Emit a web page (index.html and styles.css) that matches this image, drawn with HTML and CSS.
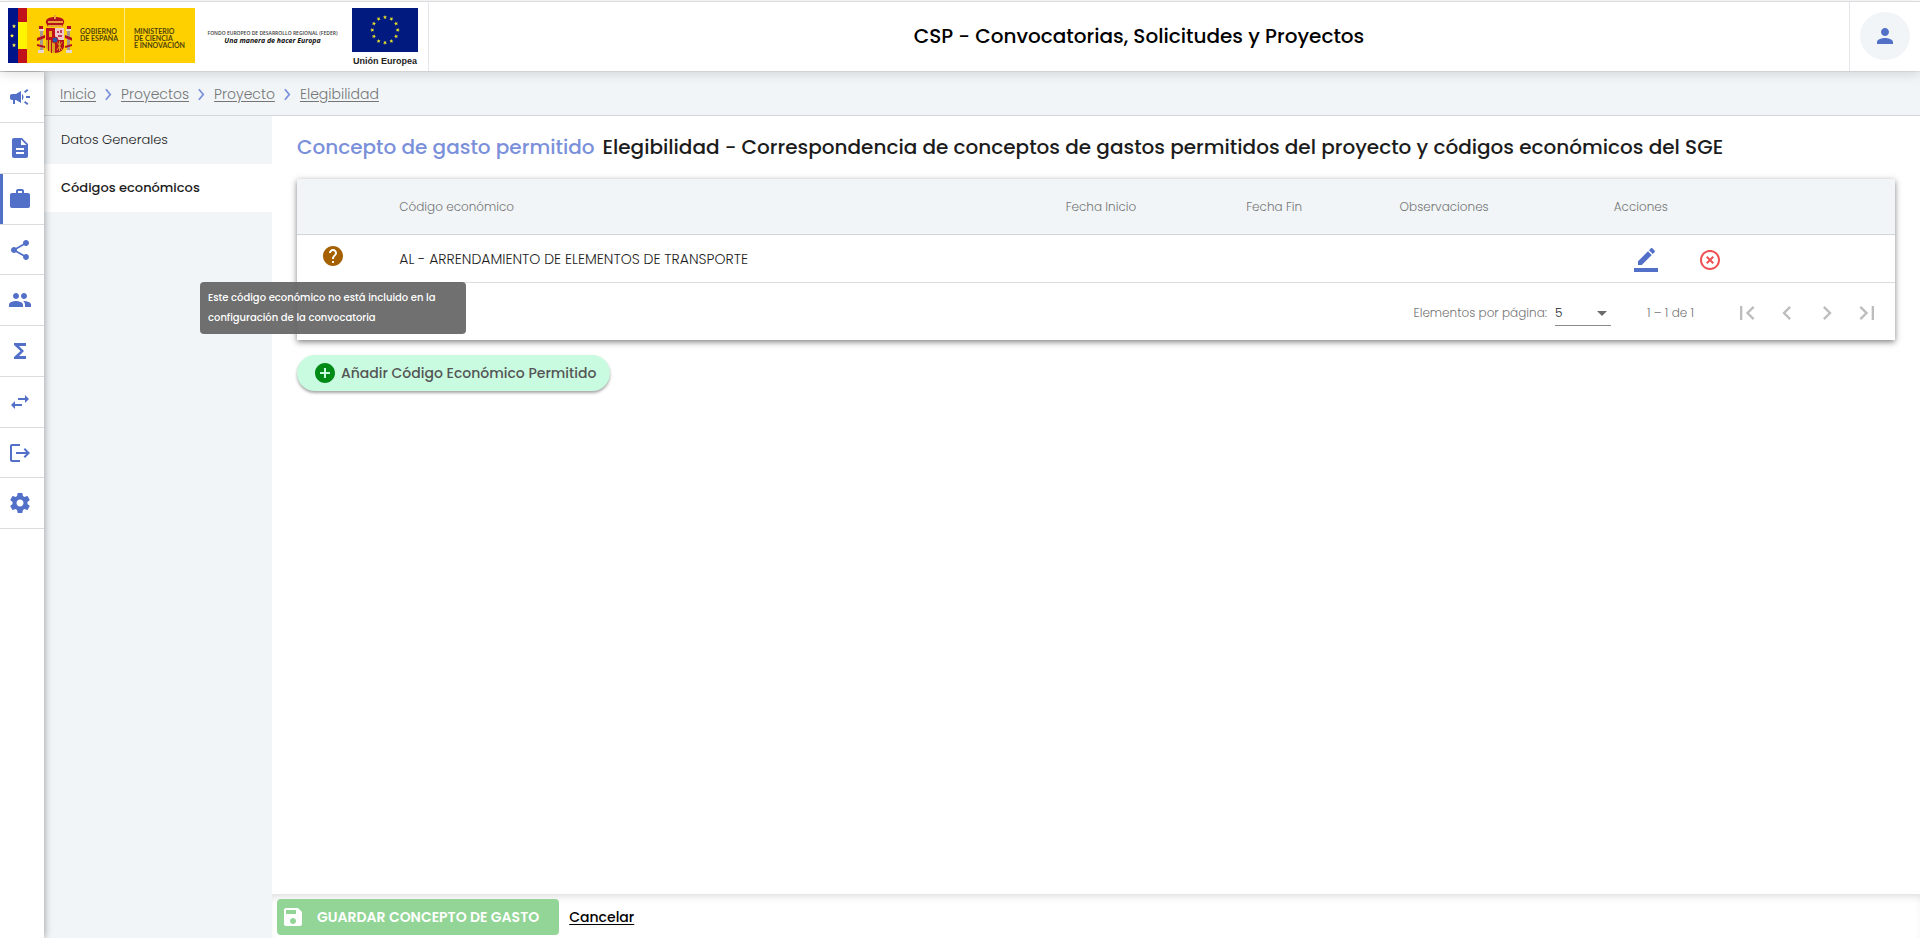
FILE: index.html
```html
<!DOCTYPE html>
<html lang="es">
<head>
<meta charset="utf-8">
<meta name="viewport" content="width=device-width, initial-scale=1">
<title>CSP - Convocatorias, Solicitudes y Proyectos</title>
<link rel="stylesheet" href="styles.css">
</head>
<body>
<header class="topbar">
  <div class="logos">
    <div class="gov-logo">
      <svg class="gov-flags" viewBox="0 0 64 55" aria-hidden="true">
        <path fill="#ffd000" d="M0 0h64v55H0z"/>
        <path fill="#001489" d="M0 0h10v55H0z"/>
        <path fill="#c1121c" d="M10 0h9v14h-9zM10 41h9v14h-9z"/>
        <path fill="#fff500" d="M10 14h9v27h-9z"/>
        <g fill="#fff04a">
          <path id="st" d="M6 16l.6 1.4 1.5.1-1.200 1 .4 1.500L6 19.200 4.700 20l.4-1.500-1.200-1 1.500-.1z"/>
          <use href="#st" x="-2" y="9.500"/>
          <use href="#st" y="19"/>
        </g>
        <g>
          <path fill="#b5131c" d="M38 15c-1-4 3-6 9-6s10 2 9 6l-2 4H40z"/>
          <path fill="#e8a33a" d="M40 13h15v2H40zM46 7h2v4h-2zM40 17h14v2H40z"/>
          <path fill="#e8d9d0" d="M31 21h5v2h-5zM58 21h5v2h-5zM30 42h6v3h-6zM58 42h6v3h-6z"/>
          <path fill="#b5131c" d="M31 18h4v3h-4zM59 18h4v3h-4z"/>
          <path fill="#a99a90" d="M32 23h3v19h-3zM59 23h3v19h-3z"/>
          <path fill="#b5131c" d="M29 30l8-3v3l-8 3zM65 30l-8-3v3l8 3zM29 36l8 2v2l-8-2zM64 36l-7 2v2l7-2z"/>
          <path fill="#c1121c" d="M38 20h9v12h-9z"/>
          <path fill="#efc9cb" d="M47 20h9v12h-9z"/>
          <path fill="#f0a818" d="M41 23h3v6h-3z"/>
          <path fill="#c23a5a" d="M49 23h2v2h-2zM52 22h2v3h-2zM50 27h4v2h-4z"/>
          <path fill="#dba21c" d="M38 32h9v13c-5 0-9-3-9-7z"/>
          <path fill="#b5131c" d="M40 32h1v11h-1zM43 32h1v13h-1zM47 32h9v6c0 4-4 7-9 7z"/>
          <path fill="none" stroke="#dba21c" d="M49 34l5 8M54 34l-5 8M51.500 33v10"/>
          <circle cx="47" cy="32" r="3" fill="#2657a8" stroke="#c1121c"/>
        </g>
      </svg>
      <span class="gov-name">GOBIERNO<br>DE ESPAÑA</span>
      <span class="gov-dept">MINISTERIO<br>DE CIENCIA<br>E INNOVACIÓN</span>
    </div>
    <p class="feder">FONDO EUROPEO DE DESARROLLO REGIONAL (FEDER)<em>Una manera de hacer Europa</em></p>
    <div class="eu-logo">
      <svg class="eu-flag" viewBox="0 0 66 44" aria-hidden="true">
        <path fill="#001a80" d="M0 0h66v44H0z"/>
        <g fill="#e8e02a">
          <path id="s" d="M33 7l.6 1.400 1.500.1-1.200 1 .4 1.500-1.300-.8-1.300.8.4-1.500-1.200-1 1.500-.1z"/>
          <use href="#s" transform="rotate(30 33 22)"/><use href="#s" transform="rotate(60 33 22)"/>
          <use href="#s" transform="rotate(90 33 22)"/><use href="#s" transform="rotate(120 33 22)"/>
          <use href="#s" transform="rotate(150 33 22)"/><use href="#s" transform="rotate(180 33 22)"/>
          <use href="#s" transform="rotate(210 33 22)"/><use href="#s" transform="rotate(240 33 22)"/>
          <use href="#s" transform="rotate(270 33 22)"/><use href="#s" transform="rotate(300 33 22)"/>
          <use href="#s" transform="rotate(330 33 22)"/>
        </g>
      </svg>
      <span class="eu-name">Unión Europea</span>
    </div>
  </div>
  <h1 class="app-title">CSP - Convocatorias, Solicitudes y Proyectos</h1>
  <div class="user-area">
    <button class="user-button" type="button" aria-label="Usuario">
      <svg class="icon" viewBox="0 0 24 24"><path d="M12 12c2.210 0 4-1.790 4-4s-1.790-4-4-4-4 1.790-4 4 1.790 4 4 4zm0 2c-2.670 0-8 1.340-8 4v2h16v-2c0-2.660-5.330-4-8-4z"/></svg>
    </button>
  </div>
</header>

<div class="shell">
  <nav class="rail" aria-label="Módulos">
    <a class="rail-item" href="#" aria-label="Convocatorias"><svg class="icon" viewBox="0 0 24 24"><path d="M18 11v2h4v-2h-4zm-2 6.610c.96.710 2.210 1.650 3.200 2.390.4-.53.8-1.070 1.200-1.600-.99-.74-2.240-1.680-3.200-2.400-.4.540-.8 1.080-1.200 1.610zM20.400 5.600c-.4-.53-.8-1.070-1.200-1.600-.99.740-2.240 1.680-3.200 2.400.4.530.8 1.070 1.200 1.600.96-.72 2.210-1.650 3.200-2.400zM4 9c-1.100 0-2 .9-2 2v2c0 1.100.9 2 2 2h1v4h2v-4h1l5 3V6L8 9H4zm11.500 3c0-1.330-.58-2.530-1.500-3.350v6.690c.92-.81 1.500-2.010 1.500-3.340z"/></svg></a>
    <a class="rail-item" href="#" aria-label="Solicitudes"><svg class="icon" viewBox="0 0 24 24"><path d="M14 2H6c-1.100 0-1.990.9-1.990 2L4 20c0 1.100.89 2 1.990 2H18c1.100 0 2-.9 2-2V8l-6-6zm2 16H8v-2h8v2zm0-4H8v-2h8v2zm-3-5V3.500L18.500 9H13z"/></svg></a>
    <a class="rail-item rail-item-active" href="#" aria-label="Proyectos"><svg class="icon" viewBox="0 0 24 24"><path d="M20 6h-4V4c0-1.110-.89-2-2-2h-4c-1.110 0-2 .89-2 2v2H4c-1.110 0-1.990.89-1.990 2L2 19c0 1.110.89 2 2 2h16c1.110 0 2-.89 2-2V8c0-1.110-.89-2-2-2zm-6 0h-4V4h4v2z"/></svg></a>
    <a class="rail-item" href="#" aria-label="Compartir"><svg class="icon" viewBox="0 0 24 24"><path d="M18 16.080c-.76 0-1.440.3-1.960.77L8.910 12.700c.05-.23.090-.46.090-.7s-.04-.47-.09-.7l7.050-4.110c.54.5 1.250.81 2.040.81 1.660 0 3-1.340 3-3s-1.340-3-3-3-3 1.340-3 3c0 .24.040.47.090.7L8.040 9.810C7.500 9.310 6.790 9 6 9c-1.660 0-3 1.340-3 3s1.340 3 3 3c.79 0 1.500-.31 2.040-.81l7.120 4.160c-.05.210-.08.430-.08.650 0 1.610 1.310 2.920 2.920 2.920s2.920-1.310 2.920-2.920-1.310-2.920-2.920-2.920z"/></svg></a>
    <a class="rail-item" href="#" aria-label="Grupos"><svg class="icon" viewBox="0 0 24 24"><path d="M16 11c1.660 0 2.990-1.340 2.990-3S17.660 5 16 5c-1.660 0-3 1.340-3 3s1.340 3 3 3zm-8 0c1.660 0 2.990-1.340 2.990-3S9.660 5 8 5C6.340 5 5 6.340 5 8s1.340 3 3 3zm0 2c-2.330 0-7 1.170-7 3.500V19h14v-2.500c0-2.330-4.670-3.500-7-3.500zm8 0c-.29 0-.62.020-.97.050 1.160.84 1.970 1.970 1.970 3.450V19h6v-2.500c0-2.330-4.670-3.500-7-3.500z"/></svg></a>
    <a class="rail-item" href="#" aria-label="Totales"><svg class="icon" viewBox="0 0 24 24"><path d="M18 4H6v2l6.500 6L6 18v2h12v-3h-7l5-5-5-5h7z"/></svg></a>
    <a class="rail-item" href="#" aria-label="Intercambios"><svg class="icon" viewBox="0 0 24 24"><path d="M6.990 11L3 15l3.990 4v-3H14v-2H6.990v-3zM21 9l-3.990-4v3H10v2h7.010v3L21 9z"/></svg></a>
    <a class="rail-item" href="#" aria-label="Salidas"><svg class="icon" viewBox="0 0 24 24"><path d="M4 5h8V3H4c-1.100 0-2 .9-2 2v14c0 1.100.9 2 2 2h8v-2H4V5zM17 7l-1.410 1.410L18.170 11H8v2h10.170l-2.580 2.580L17 17l5-5-5-5z"/></svg></a>
    <a class="rail-item" href="#" aria-label="Configuración"><svg class="icon" viewBox="0 0 24 24"><path d="M19.430 12.980c.04-.32.070-.64.070-.98s-.03-.66-.07-.98l2.110-1.650c.19-.15.240-.42.120-.64l-2-3.460c-.12-.22-.39-.3-.61-.22l-2.490 1c-.52-.4-1.080-.73-1.690-.98l-.38-2.650C14.460 2.180 14.250 2 14 2h-4c-.25 0-.46.180-.49.420l-.38 2.650c-.61.250-1.170.590-1.690.98l-2.490-1c-.23-.09-.49 0-.61.220l-2 3.460c-.13.220-.07.490.12.640l2.110 1.650c-.04.320-.07.650-.07.980s.03.660.07.980l-2.110 1.650c-.19.150-.24.420-.12.640l2 3.460c.12.220.39.300.61.220l2.490-1c.52.400 1.080.730 1.690.98l.38 2.650c.03.240.24.420.49.420h4c.25 0 .46-.18.490-.42l.38-2.650c.61-.25 1.170-.59 1.690-.98l2.490 1c.23.090.49 0 .61-.22l2-3.460c.12-.22.070-.49-.12-.64l-2.110-1.650zM12 15.500c-1.930 0-3.500-1.570-3.500-3.500s1.570-3.500 3.500-3.500 3.500 1.570 3.500 3.500-1.570 3.500-3.500 3.500z"/></svg></a>
  </nav>

  <div class="workspace">
    <nav class="breadcrumb" aria-label="Ruta">
      <a href="#">Inicio</a><svg class="crumb-sep" viewBox="0 0 8 14"><path d="M1 1l5 6-5 6"/></svg>
      <a href="#">Proyectos</a><svg class="crumb-sep" viewBox="0 0 8 14"><path d="M1 1l5 6-5 6"/></svg>
      <a href="#">Proyecto</a><svg class="crumb-sep" viewBox="0 0 8 14"><path d="M1 1l5 6-5 6"/></svg>
      <a href="#">Elegibilidad</a>
    </nav>
    <div class="columns">
      <nav class="sidenav" aria-label="Secciones">
        <a class="sidenav-item" href="#">Datos Generales</a>
        <a class="sidenav-item sidenav-item-active" href="#">Códigos económicos</a>
      </nav>
      <div class="page">
        <main class="content">
          <h2 class="page-title"><span class="page-title-lead">Concepto de gasto permitido</span><span>Elegibilidad - Correspondencia de conceptos de gastos permitidos del proyecto y códigos económicos del SGE</span></h2>
          <section class="card">
            <table class="grid">
              <colgroup><col class="col-help"><col class="col-code"><col class="col-start"><col class="col-end"><col class="col-notes"><col class="col-actions"></colgroup>
              <thead>
                <tr><th></th><th>Código económico</th><th>Fecha Inicio</th><th>Fecha Fin</th><th>Observaciones</th><th>Acciones</th></tr>
              </thead>
              <tbody>
                <tr>
                  <td class="help-cell">
                    <svg class="icon help-icon" viewBox="0 0 24 24"><path d="M12 2C6.480 2 2 6.480 2 12s4.480 10 10 10 10-4.480 10-10S17.520 2 12 2zm1 17h-2v-2h2v2zm2.070-7.750l-.9.920C13.450 12.900 13 13.500 13 15h-2v-.5c0-1.100.45-2.100 1.170-2.830l1.240-1.260c.37-.36.590-.86.590-1.410 0-1.100-.9-2-2-2s-2 .9-2 2H8c0-2.210 1.790-4 4-4s4 1.790 4 4c0 .88-.36 1.680-.93 2.250z"/></svg>
                    <div class="tooltip" role="tooltip">Este código económico no está incluido en la configuración de la convocatoria</div>
                  </td>
                  <td>AL - ARRENDAMIENTO DE ELEMENTOS DE TRANSPORTE</td>
                  <td></td><td></td><td></td>
                  <td>
                    <div class="actions">
                      <button class="icon-button" type="button" aria-label="Editar"><svg class="icon" viewBox="0 0 24 24"><path d="M17.750 7L14 3.250l-10 10V17h3.750l10-10zm2.960-2.960c.39-.39.390-1.020 0-1.410L18.370.29c-.39-.39-1.020-.39-1.410 0L15 2.250 18.750 6l1.960-1.960z"/><path d="M0 20h24v4H0z"/></svg></button>
                      <button class="icon-button icon-button-danger" type="button" aria-label="Eliminar"><svg class="icon" viewBox="0 0 24 24"><path d="M14.590 8L12 10.590 9.410 8 8 9.410 10.590 12 8 14.590 9.410 16 12 13.410 14.590 16 16 14.590 13.410 12 16 9.410 14.590 8zM12 2C6.470 2 2 6.470 2 12s4.470 10 10 10 10-4.470 10-10S17.530 2 12 2zm0 18c-4.410 0-8-3.590-8-8s3.590-8 8-8 8 3.590 8 8-3.590 8-8 8z"/></svg></button>
                    </div>
                  </td>
                </tr>
              </tbody>
            </table>
            <div class="paginator">
              <label class="page-size-label" for="page-size">Elementos por página:</label>
              <span class="select-wrap"><select id="page-size" class="page-size"><option>5</option><option>10</option><option>25</option></select></span>
              <span class="range">1 – 1 de 1</span>
              <button class="page-button" type="button" disabled aria-label="Primera página"><svg class="page-icon" viewBox="0 0 24 24"><path d="M18.410 16.590L13.820 12l4.590-4.590L17 6l-6 6 6 6zM6 6h2v12H6z"/></svg></button>
              <button class="page-button" type="button" disabled aria-label="Anterior"><svg class="page-icon" viewBox="0 0 24 24"><path d="M15.410 7.410L14 6l-6 6 6 6 1.410-1.410L10.830 12z"/></svg></button>
              <button class="page-button" type="button" disabled aria-label="Siguiente"><svg class="page-icon" viewBox="0 0 24 24"><path d="M10 6L8.590 7.410 13.170 12l-4.580 4.590L10 18l6-6z"/></svg></button>
              <button class="page-button" type="button" disabled aria-label="Última página"><svg class="page-icon" viewBox="0 0 24 24"><path d="M5.590 7.410L10.180 12l-4.590 4.590L7 18l6-6-6-6zM16 6h2v12h-2z"/></svg></button>
            </div>
          </section>
          <button class="add-button" type="button"><svg class="icon" viewBox="0 0 24 24"><path d="M12 2C6.480 2 2 6.480 2 12s4.480 10 10 10 10-4.480 10-10S17.520 2 12 2zm5 11h-4v4h-2v-4H7v-2h4V7h2v4h4v2z"/></svg>Añadir Código Económico Permitido</button>
        </main>
        <footer class="action-bar">
          <button class="save-button" type="button"><svg class="icon" viewBox="0 0 24 24"><path d="M17 3H5c-1.110 0-2 .9-2 2v14c0 1.100.89 2 2 2h14c1.100 0 2-.9 2-2V7l-4-4zm-5 16c-1.660 0-3-1.340-3-3s1.340-3 3-3 3 1.340 3 3-1.340 3-3 3zm3-10H5V5h10v4z"/></svg>GUARDAR CONCEPTO DE GASTO</button>
          <a class="cancel-link" href="#">Cancelar</a>
        </footer>
      </div>
    </div>
  </div>
</div>
</body>
</html>
```

FILE: styles.css
```css
*,
*::before,
*::after {
  box-sizing: border-box;
}

:root {
  --blue: #5370c9;
  --pale: #f1f5f8;
  --line: #dadcdf;
  --muted: #757575;
}

body {
  margin: 0;
  min-height: 100vh;
  display: flex;
  flex-direction: column;
  background: #fff;
  color: #1c1c1c;
  font-family: Poppins, Inter, "Liberation Sans", sans-serif;
  font-size: 14px;
  font-weight: 300;
}

button,
select {
  font: inherit;
  color: inherit;
  border: 0;
  background: none;
  padding: 0;
}

a {
  color: inherit;
  text-decoration: none;
}

.icon {
  display: block;
  flex: none;
  width: 24px;
  height: 24px;
  fill: currentColor;
}

/* Top bar */
.topbar {
  display: flex;
  align-items: stretch;
  height: 70px;
  margin-top: 1px;
  border-top: 1px solid var(--line);
  background: #fff;
  box-shadow: 0 2px 12px rgba(0, 0, 0, 0.15);
  position: relative;
  z-index: 2;
}

.logos {
  display: flex;
  align-items: flex-start;
  padding: 6px 10px 0 8px;
  border-right: 1px solid #e4e6ea;
}

.gov-logo {
  display: flex;
  align-items: stretch;
  width: 187px;
  height: 55px;
  background: #ffd000;
  color: #4f430a;
  font-family: Lato, sans-serif;
  font-size: 7px;
  font-weight: 700;
  line-height: 7px;
}

.gov-flags {
  width: 64px;
  height: 55px;
  flex: none;
}

.gov-name,
.gov-dept {
  padding-top: 20px;
  white-space: nowrap;
}

.gov-name {
  width: 53px;
  padding-left: 8px;
  border-right: 1px solid #ffe680;
}

.gov-dept {
  padding-left: 9px;
}

.feder {
  margin: 21px 12px 0 10px;
  width: 135px;
  font-family: "Open Sans", sans-serif;
  font-size: 5px;
  font-weight: 600;
  line-height: 8px;
  text-align: center;
  white-space: nowrap;
  color: #3c3c3c;
}

.feder em {
  display: block;
  font-size: 7px;
  font-weight: 700;
  color: #111;
}

.eu-logo {
  width: 66px;
}

.eu-flag {
  display: block;
  width: 66px;
  height: 44px;
}

.eu-name {
  display: block;
  margin-top: 3px;
  font-family: "Liberation Sans", Arial, sans-serif;
  font-size: 9px;
  font-weight: 700;
  line-height: 12px;
  white-space: nowrap;
  text-align: center;
  color: #222;
}

.app-title {
  flex: 1;
  margin: 0;
  padding-bottom: 2px;
  align-self: center;
  text-align: center;
  font-size: 20px;
  font-weight: 500;
  line-height: 32px;
  color: #000;
}

.user-area {
  display: flex;
  align-items: center;
  padding: 0 10px 2px;
  border-left: 1px solid #e4e6ea;
}

.user-button {
  display: grid;
  place-items: center;
  width: 50px;
  height: 48px;
  border-radius: 50%;
  background: var(--pale);
  color: var(--blue);
}

/* Frame */
.shell {
  flex: 1;
  display: flex;
  border-top: 1px solid #e4e6ea;
}

.rail {
  width: 44px;
  background: #fff;
  box-shadow: 0 0 8px rgba(0, 0, 0, 0.4);
  position: relative;
  z-index: 1;
}

.rail-item {
  display: flex;
  align-items: center;
  height: 51px;
  padding-left: 8px;
  border-bottom: 1px solid var(--line);
  color: var(--blue);
}

.rail-item:nth-child(4n) {
  height: 50px;
}

.rail-item-active {
  box-shadow: inset 3px 0 0 var(--blue);
}

.workspace {
  flex: 1;
  min-width: 0;
  display: flex;
  flex-direction: column;
}

.breadcrumb {
  display: flex;
  align-items: center;
  gap: 9px;
  height: 44px;
  padding: 2px 0 0 16px;
  background: var(--pale);
  border-bottom: 1px solid #d3d6da;
  color: var(--muted);
}

.breadcrumb a {
  text-decoration: underline;
  text-underline-offset: 2px;
}

.crumb-sep {
  width: 7px;
  height: 13px;
  fill: none;
  stroke: #7b90da;
  stroke-width: 2;
}

.columns {
  flex: 1;
  display: flex;
}

.sidenav {
  width: 228px;
  flex: none;
  background: var(--pale);
  font-size: 13px;
}

.sidenav-item {
  display: block;
  padding: 12px 17px;
  line-height: 24px;
}

.sidenav-item-active {
  background: #fff;
  font-weight: 500;
}

.page {
  flex: 1;
  min-width: 0;
  display: flex;
  flex-direction: column;
}

.content {
  flex: 1;
  padding: 15px 25px;
}

.page-title {
  display: flex;
  gap: 8px;
  margin: 0 0 16px;
  font-size: 20px;
  font-weight: 500;
  line-height: 32px;
}

.page-title-lead {
  color: #7b90da;
  flex: none;
}

/* Table card */
.card {
  background: #fff;
  box-shadow: 0 2px 6px rgba(0, 0, 0, 0.5);
}

.grid {
  width: 100%;
  border-collapse: separate;
  border-spacing: 0;
  table-layout: fixed;
}

.col-help { width: 6.4%; }
.col-code { width: 41.7%; }
.col-start { width: 11.3%; }
.col-end { width: 9.6%; }
.col-notes { width: 13.4%; }

.grid th,
.grid td {
  text-align: left;
  border-bottom: 1px solid var(--line);
}

.grid th {
  height: 56px;
  padding: 0;
  background: var(--pale);
  border-bottom-color: #cfd5da;
  color: var(--muted);
  font-size: 12px;
  font-weight: 300;
}

.grid td {
  height: 48px;
  padding: 2px 0 0;
}

.grid .help-cell {
  position: relative;
  padding: 0 0 6px 24px;
}

.help-icon {
  color: #a56000;
}

.tooltip {
  position: absolute;
  top: 100%;
  left: -97px;
  z-index: 3;
  width: 266px;
  padding: 6px 8px;
  border-radius: 4px;
  background: rgba(97, 97, 97, 0.9);
  color: #fff;
  font-size: 10px;
  font-weight: 500;
  line-height: 20px;
}

.actions {
  display: flex;
  gap: 40px;
  padding-left: 20px;
}

.icon-button {
  color: var(--blue);
}

.icon-button-danger {
  color: #ee5253;
}

.paginator {
  display: flex;
  align-items: center;
  justify-content: flex-end;
  height: 57px;
  padding: 3px 8px 0 0;
  color: var(--muted);
  font-size: 12px;
}

.select-wrap {
  position: relative;
  margin: 0 36px 0 8px;
}

.select-wrap::after {
  content: "";
  position: absolute;
  top: 11px;
  right: 4px;
  border: 5px solid transparent;
  border-top-color: #6b6b6b;
  border-bottom: 0;
  pointer-events: none;
}

.page-size {
  display: block;
  appearance: none;
  width: 56px;
  height: 26px;
  border-bottom: 1px solid #8a8a8a;
  border-radius: 0;
  color: #222;
}

.range {
  margin-right: 33px;
}

.page-button {
  display: grid;
  place-items: center;
  width: 40px;
  height: 40px;
}

.page-icon {
  width: 28px;
  height: 28px;
  fill: #bdbdbd;
}

.add-button {
  display: flex;
  align-items: center;
  gap: 4px;
  height: 36px;
  margin-top: 15px;
  padding: 0 14px 0 16px;
  border-radius: 18px;
  background: #c9fbe1;
  box-shadow: 0 2px 3px rgba(0, 0, 0, 0.35);
  color: #555;
  font-weight: 500;
}

.add-button .icon {
  color: #008a16;
}

/* Footer actions */
.action-bar {
  display: flex;
  align-items: center;
  gap: 10px;
  height: 44px;
  padding: 2px 5px 0;
  background: #fff;
  box-shadow: inset 0 6px 8px -4px rgba(0, 0, 0, 0.15);
}

.save-button {
  display: flex;
  align-items: center;
  gap: 12px;
  height: 36px;
  padding: 0 20px 0 4px;
  border-radius: 4px;
  background: #92d596;
  color: #fff;
  font-weight: 600;
}

.cancel-link {
  color: #000;
  font-weight: 500;
  text-decoration: underline;
  text-underline-offset: 2px;
}
```
